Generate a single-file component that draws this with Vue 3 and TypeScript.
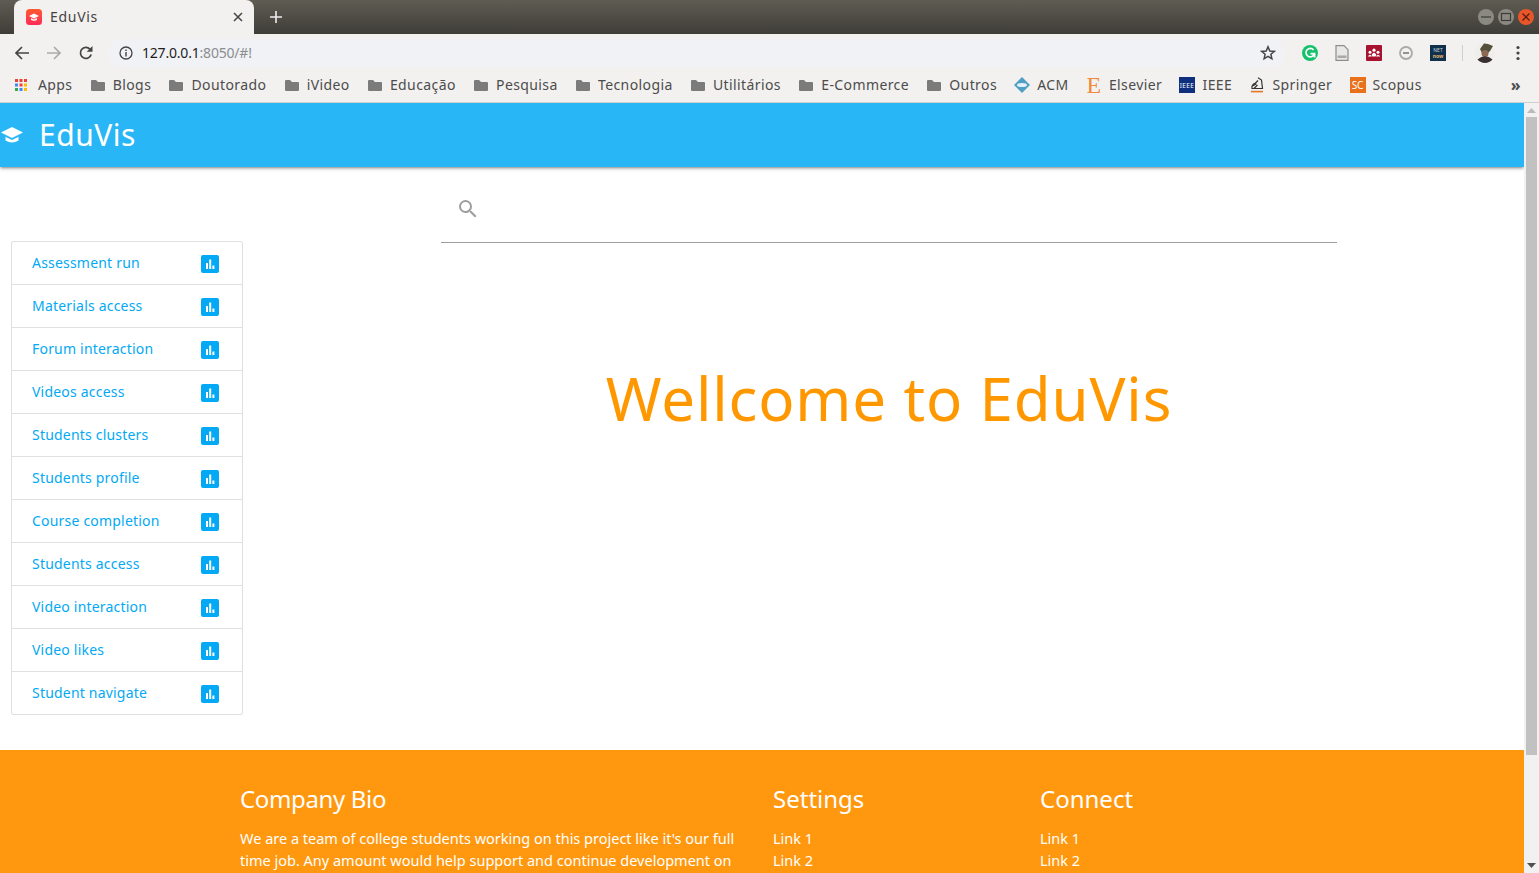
<template>
  <div class="window">
    <div class="tabstrip">
      <div class="tab">
        <svg class="favicon" viewBox="0 0 16 16" width="16" height="16">
          <defs>
            <linearGradient id="fav" x1="0" y1="0" x2="0" y2="1">
              <stop offset="0" stop-color="#ff5a30" />
              <stop offset="1" stop-color="#ff2a58" />
            </linearGradient>
          </defs>
          <rect width="16" height="16" rx="3.5" fill="url(#fav)" />
          <path d="M8 4.5 L13 7 L8 9.5 L3 7 Z M5 9 V11 Q8 12.6 11 11 V9 L8 10.5 Z" fill="#fff" />
        </svg>
        <span class="tab-title">EduVis</span>
        <svg class="tab-close" viewBox="0 0 10 10" width="10" height="10">
          <path d="M1 1 L9 9 M9 1 L1 9" stroke="#444" stroke-width="1.5" />
        </svg>
      </div>
      <svg class="new-tab" viewBox="0 0 12 12" width="12" height="12">
        <path d="M6 0 V12 M0 6 H12" stroke="#eee" stroke-width="1.6" />
      </svg>
      <div class="window-buttons">
        <span class="win-btn"><svg viewBox="0 0 16 16" width="16" height="16"><path d="M3 8 H13" stroke="#3c3b37" stroke-width="1.2" /></svg></span>
        <span class="win-btn"><svg viewBox="0 0 16 16" width="16" height="16"><rect x="3.5" y="4.5" width="9" height="7" fill="none" stroke="#3c3b37" stroke-width="1.2" /></svg></span>
        <span class="win-btn close"><svg viewBox="0 0 16 16" width="16" height="16"><path d="M4.5 4.5 L11.5 11.5 M11.5 4.5 L4.5 11.5" stroke="#5a2010" stroke-width="1.3" /></svg></span>
      </div>
    </div>

    <div class="toolbar">
      <svg class="nav-icon" viewBox="0 0 16 16" width="16" height="16">
        <path d="M15 8 H2 M8 2 L2 8 L8 14" fill="none" stroke="#444" stroke-width="1.7" />
      </svg>
      <svg class="nav-icon" viewBox="0 0 16 16" width="16" height="16">
        <path d="M1 8 H14 M8 2 L14 8 L8 14" fill="none" stroke="#aaa" stroke-width="1.7" />
      </svg>
      <svg class="nav-icon" viewBox="0 0 16 16" width="16" height="16">
        <path d="M13.2 9.5 A5.5 5.5 0 1 1 12 4.2" fill="none" stroke="#444" stroke-width="1.7" />
        <path d="M14.5 1 V6.8 H8.7 Z" fill="#444" />
      </svg>
      <div class="omnibox">
        <svg viewBox="0 0 14 14" width="14" height="14">
          <circle cx="7" cy="7" r="6" fill="none" stroke="#444" stroke-width="1.3" />
          <path d="M7 6 V10.5 M7 3.5 V5" stroke="#444" stroke-width="1.4" />
        </svg>
        <span class="url"><b>127.0.0.1</b>:8050/#!</span>
        <svg class="star" viewBox="0 0 16 16" width="16" height="16">
          <path d="M8 1.8 L9.8 6 L14.3 6.4 L10.9 9.3 L11.9 13.8 L8 11.4 L4.1 13.8 L5.1 9.3 L1.7 6.4 L6.2 6 Z" fill="none" stroke="#444" stroke-width="1.5" />
        </svg>
      </div>
      <div class="extensions">
        <svg viewBox="0 0 16 16" width="16" height="16">
          <circle cx="8" cy="8" r="8" fill="#15c26b" />
          <path d="M11.5 5 A4.2 4.2 0 1 0 12 9.5 M8.5 8.6 H12.6 V12.5" fill="none" stroke="#fff" stroke-width="1.7" />
        </svg>
        <svg viewBox="0 0 16 16" width="16" height="16">
          <path d="M2 .7 H10 L14 4.7 V15.3 H2 Z" fill="#e8e8e6" stroke="#8c8c8c" stroke-width="1.2" />
          <rect x="3.5" y="10.5" width="9" height="2.5" fill="#a8a8a8" />
        </svg>
        <svg viewBox="0 0 16 16" width="16" height="16">
          <rect width="16" height="16" rx="1" fill="#a8122f" />
          <circle cx="4" cy="7.2" r="1.5" fill="#fff" />
          <circle cx="8" cy="5.2" r="1.6" fill="#fff" />
          <circle cx="12" cy="7.2" r="1.5" fill="#fff" />
          <path d="M1.8 11.5 Q4 7.8 6 11.5 Z M5.6 10 Q8 5.6 10.4 10 L9.5 11.5 H6.5 Z M10 11.5 Q12 7.8 14.2 11.5 Z" fill="#fff" />
        </svg>
        <svg viewBox="0 0 16 16" width="16" height="16">
          <circle cx="8" cy="8" r="6" fill="none" stroke="#aaa" stroke-width="1.8" />
          <path d="M5 8 H11" stroke="#888" stroke-width="1.8" />
        </svg>
        <svg class="ext-net" viewBox="0 0 16 16" width="16" height="16">
          <rect width="16" height="16" fill="#10304c" />
          <text x="8" y="6.5" text-anchor="middle" font-size="5" fill="#c8d4dc">NET</text>
          <text x="8" y="12.5" text-anchor="middle" font-size="5" font-weight="700" fill="#e8b06a">now</text>
        </svg>
      </div>
      <span class="toolbar-sep"></span>
      <svg class="avatar" viewBox="0 0 20 20" width="20" height="20">
        <circle cx="10" cy="10" r="10" fill="#eeeeea" />
        <path d="M5 6 L9 .5 L13 1 L18 3 L15 8 L13 10 H7 Z" fill="#55503a" />
        <circle cx="10" cy="10.5" r="3.5" fill="#8c6a52" />
        <path d="M2.5 16.5 Q10 10 17.5 16.5 A10 10 0 0 1 2.5 16.5 Z" fill="#3a2f30" />
      </svg>
      <svg class="menu-dots" viewBox="0 0 4 16" width="4" height="16">
        <circle cx="2" cy="2.5" r="1.6" fill="#444" /><circle cx="2" cy="8" r="1.6" fill="#444" /><circle cx="2" cy="13.5" r="1.6" fill="#444" />
      </svg>
    </div>

    <div class="bookmarks">
      <span class="bookmark apps">
        <svg viewBox="0 0 14 14" width="14" height="14">
          <rect v-for="dot in appDots" :key="dot.key" :x="dot.x" :y="dot.y" width="3" height="3" :fill="dot.fill" />
        </svg>
        Apps
      </span>
      <span v-for="name in folders" :key="name" class="bookmark">
        <svg viewBox="0 0 16 14" width="16" height="14">
          <path d="M1 3 Q1 2 2 2 H6 L8 4 H14 Q15 4 15 5 V12 Q15 13 14 13 H2 Q1 13 1 12 Z" fill="#7b7b7b" />
        </svg>
        {{ name }}
      </span>
      <span class="bookmark">
        <svg viewBox="0 0 16 16" width="16" height="16">
          <path d="M8 0 L16 8 L8 16 L0 8 Z" fill="#4f9fc4" />
          <ellipse cx="8" cy="8" rx="5" ry="2" fill="#e4f2f8" />
        </svg>
        ACM
      </span>
      <span class="bookmark">
        <span class="elsevier-mark">E</span>
        Elsevier
      </span>
      <span class="bookmark">
        <svg viewBox="0 0 16 16" width="16" height="16">
          <rect width="16" height="16" fill="#0d2f7e" />
          <text x="8" y="10.5" text-anchor="middle" font-size="6.5" fill="#fff">IEEE</text>
        </svg>
        IEEE
      </span>
      <span class="bookmark">
        <svg viewBox="0 0 16 16" width="16" height="16">
          <path d="M9 .8 L12.5 3 L13.5 11.5 H3 Q2.3 7.5 6.5 6 L9 3.5 M3.5 9 L7.5 6.8 M5 11.5 L8.5 8" fill="none" stroke="#333" stroke-width="1.2" />
          <path d="M2 14.6 H14" stroke="#e87722" stroke-width="1.6" />
        </svg>
        Springer
      </span>
      <span class="bookmark">
        <span class="scopus-mark">SC</span>
        Scopus
      </span>
      <span class="bookmarks-more">»</span>
    </div>

    <div class="viewport">
      <div class="page">
        <header class="navbar">
          <svg class="brand-icon" viewBox="0 0 24 18" width="24" height="18">
            <path d="M12 1 L23 6.5 L12 12 L1 6.5 Z" fill="#fff" />
            <path d="M5.5 10.8 V14.5 Q12 18.5 18.5 14.5 V10.8 L12 14 Z" fill="#fff" />
          </svg>
          <span class="brand-name">EduVis</span>
        </header>

        <main class="content">
          <ul class="collection">
            <li v-for="item in menuItems" :key="item" class="collection-item">
              <a>{{ item }}</a>
              <span class="chart-badge">
                <svg viewBox="0 0 18 18" width="18" height="18">
                  <path d="M5 8 H7 V14 H5 Z M8.2 4.5 H10.2 V14 H8.2 Z M11.4 10.5 H13.4 V14 H11.4 Z" fill="#fff" />
                </svg>
              </span>
            </li>
          </ul>

          <section class="main-column">
            <div class="search-field">
              <svg viewBox="0 0 24 24" width="24" height="24">
                <path d="M15.5 14h-.79l-.28-.27A6.47 6.47 0 0 0 16 9.5 6.5 6.5 0 1 0 9.5 16c1.61 0 3.09-.59 4.23-1.57l.27.28v.79l5 4.99L20.49 19l-4.99-5zm-6 0C7.01 14 5 11.99 5 9.5S7.01 5 9.5 5 14 7.01 14 9.5 11.99 14 9.5 14z" fill="#9e9e9e" />
              </svg>
            </div>
            <h1 class="welcome">Wellcome to EduVis</h1>
          </section>
        </main>

        <footer class="footer">
          <div class="footer-bio">
            <h5>Company Bio</h5>
            <p>We are a team of college students working on this project like it's our full time job. Any amount would help support and continue development on this project and is greatly appreciated.</p>
          </div>
          <div class="footer-links">
            <h5>Settings</h5>
            <a v-for="link in footerLinks" :key="link">{{ link }}</a>
          </div>
          <div class="footer-links">
            <h5>Connect</h5>
            <a v-for="link in footerLinks" :key="link">{{ link }}</a>
          </div>
        </footer>
      </div>

      <div class="scrollbar">
        <svg viewBox="0 0 9 5" width="9" height="5"><path d="M0 5 L4.5 0 L9 5 Z" fill="#bbb" /></svg>
        <span class="scroll-thumb"></span>
        <svg viewBox="0 0 9 5" width="9" height="5"><path d="M0 0 L4.5 5 L9 0 Z" fill="#505050" /></svg>
      </div>
    </div>
  </div>
</template>

<script setup lang="ts">
const folders = [
  'Blogs',
  'Doutorado',
  'iVideo',
  'Educação',
  'Pesquisa',
  'Tecnologia',
  'Utilitários',
  'E-Commerce',
  'Outros',
]

const menuItems = [
  'Assessment run',
  'Materials access',
  'Forum interaction',
  'Videos access',
  'Students clusters',
  'Students profile',
  'Course completion',
  'Students access',
  'Video interaction',
  'Video likes',
  'Student navigate',
]

const footerLinks = ['Link 1', 'Link 2', 'Link 3', 'Link 4']

const dotColors = ['#ea4335', '#ea4335', '#ea4335', '#4285f4', '#ea4335', '#fbbc05', '#34a853', '#4285f4', '#fbbc05']
const appDots = dotColors.map((fill, i) => ({
  key: i,
  fill,
  x: 1 + (i % 3) * 4.5,
  y: 1 + Math.floor(i / 3) * 4.5,
}))
</script>

<style>
html,
body {
  margin: 0;
  overflow: hidden;
}
</style>

<style scoped>
.window {
  display: flex;
  flex-direction: column;
  height: 873px;
  overflow: hidden;
  font-family: "Noto Sans", "Open Sans", sans-serif;
  background: #fff;
}

.tabstrip {
  display: flex;
  align-items: flex-end;
  flex: 0 0 34px;
  background: linear-gradient(#5f5c53, #3f3d38);
  padding-left: 14px;
}

.tab {
  display: flex;
  align-items: center;
  gap: 8px;
  width: 240px;
  height: 34px;
  box-sizing: border-box;
  padding: 0 11px 0 12px;
  background: #f2f1ef;
  border-radius: 8px 8px 0 0;
}

.tab-title {
  flex: 1;
  margin-bottom: 1px;
  font-size: 14px;
  letter-spacing: 0.7px;
  color: #45433f;
}

.new-tab {
  margin: 0 0 11px 16px;
}

.window-buttons {
  display: flex;
  gap: 4px;
  margin: 0 5px 9px auto;
}

.win-btn {
  display: flex;
  width: 16px;
  height: 16px;
  border-radius: 50%;
  background: #8a8982;
}

.win-btn.close {
  background: #e9562a;
}

.toolbar {
  display: flex;
  align-items: center;
  flex: 0 0 38px;
  padding-left: 14px;
  background: #f2f1ef;
}

.nav-icon {
  margin-right: 16px;
}

.omnibox {
  display: flex;
  align-items: center;
  gap: 9px;
  width: 1177px;
  height: 28px;
  box-sizing: border-box;
  margin-left: -2px;
  padding: 0 9px 0 11px;
  background: #f0f2f5;
  border-radius: 14px;
}

.url {
  flex: 1;
  margin-bottom: 2px;
  font-size: 14px;
  letter-spacing: -0.2px;
  color: #8b8d90;
}

.url b {
  font-weight: 400;
  color: #1e1e1e;
}

.extensions {
  display: flex;
  gap: 16px;
  margin-left: 17px;
}

.ext-net {
  font-family: "Noto Sans", sans-serif;
}

.toolbar-sep {
  width: 1px;
  height: 16px;
  margin: 0 12px 0 16px;
  background: #cfcfcf;
}

.menu-dots {
  margin-left: 21px;
}

.bookmarks {
  display: flex;
  align-items: center;
  gap: 17.25px;
  flex: 0 0 31px;
  padding: 0 18px 5px 14px;
  box-sizing: border-box;
  border-bottom: 1px solid #d0d0d0;
  background: #f2f1ef;
  color: #4c4c4c;
  font-size: 14px;
  letter-spacing: 0.4px;
  white-space: nowrap;
}

.bookmark {
  display: flex;
  align-items: center;
  gap: 7px;
}

.bookmark.apps {
  gap: 10px;
}

.elsevier-mark {
  width: 16px;
  font: 24px/16px "Liberation Serif", serif;
  color: #f08a3c;
  text-align: center;
}

.scopus-mark {
  width: 16px;
  height: 16px;
  background: #e9711c;
  color: #fff;
  font-size: 10px;
  letter-spacing: 0;
  line-height: 16px;
  text-align: center;
}

.bookmarks-more {
  margin-left: auto;
  font-size: 16px;
  font-weight: 700;
}

.viewport {
  display: flex;
  flex: 1;
  min-height: 0;
}

.page {
  flex: 1;
  min-width: 0;
  overflow: hidden;
}

.navbar {
  display: flex;
  align-items: center;
  gap: 15px;
  height: 64px;
  background: #29b6f6;
  color: #fff;
  box-shadow: 0 2px 2px 0 rgba(0, 0, 0, 0.14), 0 3px 1px -2px rgba(0, 0, 0, 0.12), 0 1px 5px 0 rgba(0, 0, 0, 0.2);
  position: relative;
}

.brand-name {
  margin-bottom: 2px;
  font-size: 30px;
  letter-spacing: 0.5px;
}

.content {
  display: flex;
  align-items: flex-start;
  height: 583px;
  box-sizing: border-box;
  padding-left: 11px;
}

.collection {
  flex: 0 0 232px;
  box-sizing: border-box;
  margin: 74px 0 0;
  padding: 0;
  list-style: none;
  border: 1px solid #e0e0e0;
  border-radius: 2px;
}

.collection-item {
  display: flex;
  align-items: center;
  justify-content: space-between;
  height: 43px;
  box-sizing: border-box;
  padding: 0 23px 0 20px;
  border-bottom: 1px solid #e0e0e0;
  font-size: 14px;
  letter-spacing: 0.2px;
  color: #03a9f4;
}

.collection-item a {
  margin-bottom: 2px;
}

.collection-item:last-child {
  height: 42px;
  border-bottom: 0;
}

.chart-badge {
  display: flex;
  margin-top: 2px;
  background: #03a9f4;
  border-radius: 2px;
}

.main-column {
  flex: 0 0 896px;
  margin-left: 198px;
}

.search-field {
  display: flex;
  align-items: center;
  height: 76px;
  box-sizing: border-box;
  padding: 8px 0 0 15px;
  border-bottom: 1px solid #9e9e9e;
}

.welcome {
  margin: 116px 0 0;
  font-size: 60px;
  font-weight: 400;
  letter-spacing: 0.85px;
  line-height: 78px;
  color: #ff9800;
  text-align: center;
}

.footer {
  display: flex;
  height: 300px;
  box-sizing: border-box;
  padding: 32px 0 0 240px;
  background: #ff980e;
  color: #fff;
  font-size: 14.5px;
  line-height: 22px;
}

.footer h5 {
  margin: 0 0 12px;
  font-size: 24px;
  font-weight: 400;
  line-height: 33px;
}

.footer-bio h5 {
  letter-spacing: -0.35px;
}

.footer p {
  margin: 0;
}

.footer-bio {
  flex: 0 0 500px;
  margin-right: 33px;
}

.footer-links {
  display: flex;
  flex-direction: column;
  flex: 0 0 267px;
}

.scrollbar {
  display: flex;
  flex-direction: column;
  align-items: center;
  flex: 0 0 15px;
  background: #f1f1f1;
  padding: 5px 0;
  box-sizing: border-box;
}

.scroll-thumb {
  width: 11px;
  height: 638px;
  margin: 4px 0 auto;
  background: #c1c1c1;
}
</style>
